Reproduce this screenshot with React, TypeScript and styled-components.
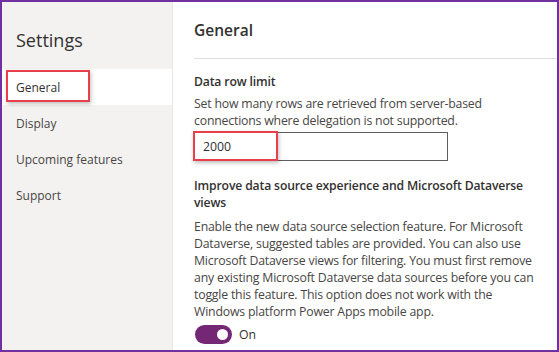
import styled, { createGlobalStyle } from "styled-components";

const Global = createGlobalStyle`
  html, body {
    margin: 0;
    padding: 0;
    background: #fff;
  }
  body {
    font-family: "Open Sans", "Noto Sans", Arial, sans-serif;
    color: #323130;
  }
`;

const Frame = styled.div`
  width: 559px;
  height: 352px;
  box-sizing: border-box;
  border: 2px solid #7030a0;
  display: flex;
  overflow: hidden;
  background: #fff;
`;

const Sidebar = styled.nav`
  width: 170px;
  flex-shrink: 0;
  background: #f3f2f1;
  border-right: 1px solid #e8e6e4;
  display: flex;
  flex-direction: column;
`;

const SideTitle = styled.h2`
  margin: 24px 0 15px 14px;
  font-size: 18px;
  font-weight: 400;
  line-height: 28px;
  color: #323130;
`;

const NavItem = styled.div<{ $active?: boolean }>`
  position: relative;
  height: 36px;
  display: flex;
  align-items: center;
  padding-left: 14px;
  font-size: 12px;
  color: ${(p) => (p.$active ? "#323130" : "#484644")};
  background: ${(p) => (p.$active ? "#fff" : "transparent")};
`;

const Highlight = styled.span<{ $w: number; $h: number }>`
  position: absolute;
  left: 4px;
  top: 1px;
  width: ${(p) => p.$w}px;
  height: ${(p) => p.$h}px;
  box-sizing: border-box;
  border: 2px solid #e8404a;
  box-shadow: 1px 2px 4px rgba(0, 0, 0, 0.25);
  pointer-events: none;
`;

const Content = styled.main`
  flex: 1;
  min-width: 0;
  padding-left: 21px;
`;

const Header = styled.h1`
  margin: 0;
  height: 55px;
  display: flex;
  align-items: center;
  font-size: 15.5px;
  font-weight: 600;
  color: #323130;
  border-bottom: 1px solid #e1dfdd;
  padding-bottom: 1px;
`;

const Section = styled.section`
  padding-top: 14px;
`;

const Label = styled.div`
  font-size: 12.2px;
  font-weight: 600;
  line-height: 17px;
  letter-spacing: -0.15px;
  color: #323130;
  margin-bottom: 5px;
  white-space: nowrap;
`;

const Desc = styled.p`
  margin: 0;
  font-size: 12.3px;
  line-height: 17px;
  letter-spacing: -0.2px;
  color: #484644;
  white-space: nowrap;
`;

const InputWrap = styled.div`
  position: relative;
  width: 254px;
  margin-top: 3px;
`;

const Input = styled.div`
  height: 29px;
  box-sizing: border-box;
  border: 1px solid #605e5c;
  display: flex;
  align-items: center;
  padding-left: 8px;
  font-size: 12.3px;
  color: #323130;
`;

const InputHighlight = styled(Highlight)`
  left: -1px;
  top: -1px;
`;

const Group = styled.div`
  margin-top: 16px;

  ${Label} {
    margin-bottom: 7px;
  }
`;

const ToggleRow = styled.div`
  display: flex;
  align-items: center;
  gap: 7px;
  margin-top: 5px;
  font-size: 12.3px;
  color: #323130;
`;

const Track = styled.span`
  width: 37px;
  height: 19px;
  border-radius: 10px;
  background: #742774;
  display: flex;
  align-items: center;
  justify-content: flex-end;
  padding-right: 4px;
  box-sizing: border-box;
  margin-left: 1px;
`;

const Knob = styled.span`
  width: 11px;
  height: 11px;
  border-radius: 50%;
  background: #fff;
`;

export default function App() {
  return (
    <>
      <Global />
      <Frame>
        <Sidebar>
          <SideTitle>Settings</SideTitle>
          <NavItem $active>
            General
            <Highlight $w={84} $h={32} />
          </NavItem>
          <NavItem>Display</NavItem>
          <NavItem>Upcoming features</NavItem>
          <NavItem>Support</NavItem>
        </Sidebar>
        <Content>
          <Header>General</Header>
          <Section>
            <Label>Data row limit</Label>
            <Desc>
              Set how many rows are retrieved from server-based
              <br />
              connections where delegation is not supported.
            </Desc>
            <InputWrap>
              <Input>2000</Input>
              <InputHighlight $w={85} $h={30} />
            </InputWrap>
            <Group>
              <Label>
                Improve data source experience and Microsoft Dataverse
                <br />
                views
              </Label>
              <Desc>
                Enable the new data source selection feature. For Microsoft
                <br />
                Dataverse, suggested tables are provided. You can also use
                <br />
                Microsoft Dataverse views for filtering. You must first remove
                <br />
                any existing Microsoft Dataverse data sources before you can
                <br />
                toggle this feature. This option does not work with the
                <br />
                Windows platform Power Apps mobile app.
              </Desc>
              <ToggleRow>
                <Track>
                  <Knob />
                </Track>
                On
              </ToggleRow>
            </Group>
          </Section>
        </Content>
      </Frame>
    </>
  );
}
